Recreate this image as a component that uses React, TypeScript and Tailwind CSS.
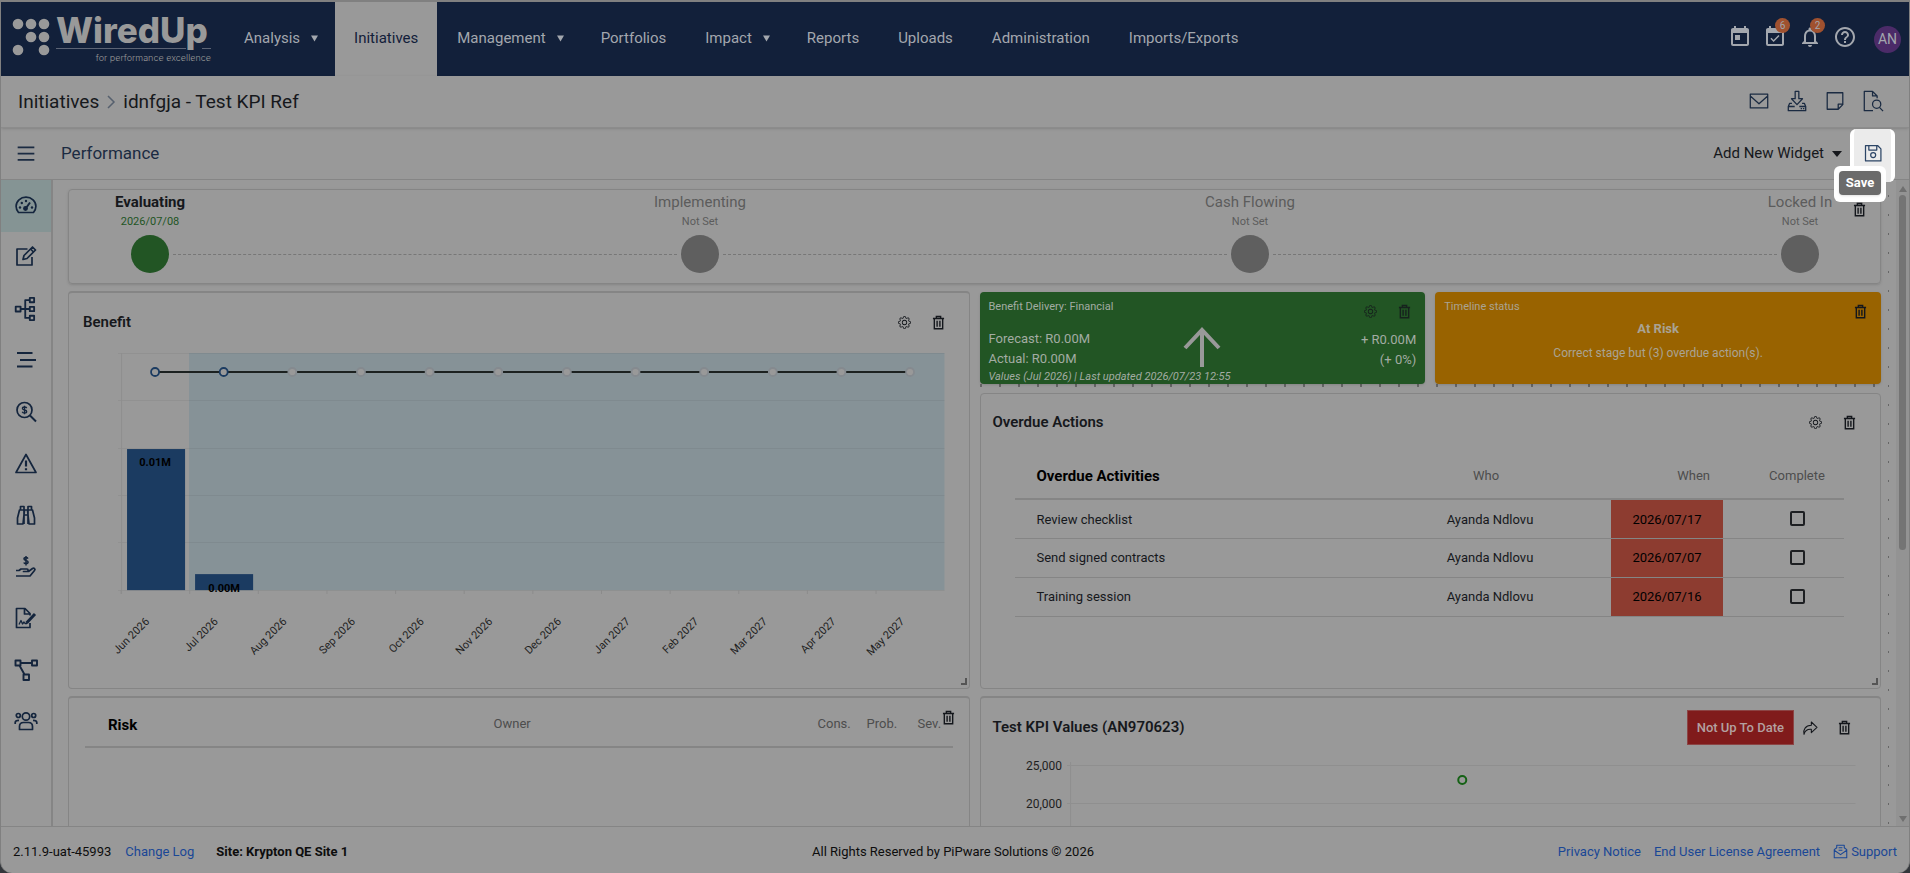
import React from 'react';
import { BsGear } from 'react-icons/bs';
import { MdEventAvailable, MdHelpOutline, MdNotificationsNone, MdToday } from 'react-icons/md';

interface IconProps {
  className?: string;
  children?: React.ReactNode;
}

const Icon: React.FC<IconProps> = ({ className = 'w-6 h-6', children }) => (
  <svg
    viewBox="0 0 24 24"
    className={className}
    fill="none"
    stroke="currentColor"
    strokeWidth="1.7"
    strokeLinejoin="round"
    aria-hidden="true"
  >
    {children}
  </svg>
);

const GaugeIcon = () => (
  <Icon>
    <path d="M4.5 18.5h15c1.500-1.700 2.400-4 2.400-6.200a9.900 9.100 0 0 0-19.800 0c0 2.200.9 4.500 2.400 6.200z" />
    <path d="M11 15.500l5-7" strokeWidth="2" />
    <circle cx="11.500" cy="14.500" r="1.600" fill="currentColor" />
    <g fill="currentColor" stroke="none">
      <circle cx="6" cy="13.500" r="1.200" />
      <circle cx="7.800" cy="9" r="1.200" />
      <circle cx="12" cy="7" r="1.200" />
      <circle cx="18" cy="13.500" r="1.200" />
    </g>
  </Icon>
);

const EditIcon = () => (
  <Icon>
    <path d="M13.500 4H3v16h15v-8" />
    <path d="M9 14.500l1-4 8.500-8.500 3 3L13 13.500z" />
    <path d="M16.500 4l3 3" />
  </Icon>
);

const HierarchyIcon = () => (
  <Icon className="w-[26px] h-[26px]">
    <path d="M2.500 9.800h4.500v4.500H2.500zM15.500 1.800h4v4h-4zM15.500 10h4v4h-4zM15.500 18.200h4v4h-4zM7 12h8.500M15.500 3.800h-4.200v16.400h4.200" />
  </Icon>
);

const BarsIcon = () => (
  <Icon>
    <path d="M3 5h15.500M6 12h16M3 18.500h15.500" strokeWidth="2.200" />
  </Icon>
);

const SearchDollarIcon = () => (
  <Icon>
    <circle cx="10.500" cy="10" r="7.500" />
    <path d="M16 15.500l6 6" strokeWidth="2" />
    <path d="M12.700 8.100c-.4-.8-1.200-1.100-2.200-1.100-1.300 0-2.100.6-2.100 1.500 0 2 4.300 1 4.300 3 0 1-.9 1.600-2.200 1.600-1.200 0-2-.5-2.300-1.300M10.500 5.700v8.600" strokeWidth="1.300" />
  </Icon>
);

const WarningIcon = () => (
  <Icon>
    <path d="M12 2.500L22 20.500H2z" />
    <path d="M12 8.500v6M12 16.300v2" strokeWidth="2.200" />
  </Icon>
);

const BinocularsIcon = () => (
  <Icon>
    <path d="M7 7H5.500L3.500 15v6H9l1.500-14M17 7h1.500l2 8v6H15L13.500 7M6.500 3.500H10V7H6.500zM14 3.500h3.500V7H14zM10 7h4M10.500 12h3M10 7v14M14 7v14" />
  </Icon>
);

const HandDollarIcon = () => (
  <Icon>
    <path d="M2 15.500h3l2-1.500h6c1.500 0 1.500 2.500 0 2.500H9.500h5l4-3c1.500-1 3.300.5 2 2l-4.500 5.500H2" />
    <path d="M14 3.600c-.4-.7-1.100-1-2-1-1.200 0-2 .6-2 1.500 0 2 4.100 1 4.100 3 0 1-.9 1.600-2.100 1.600-1.100 0-1.900-.5-2.200-1.300M12 1v9.500" strokeWidth="1.500" />
  </Icon>
);

const SignatureIcon = () => (
  <Icon>
    <path d="M16 17v4.500H2.500v-19H11l5 5v2M10.500 2.500V8H16" />
    <path d="M12.500 17l8.500-9" strokeWidth="3" />
    <path d="M5 18.500l2-4 1.500 3.500 1.500-2 1 1.500h2" strokeWidth="1.300" />
  </Icon>
);

const NetworkIcon = () => (
  <Icon>
    <path d="M1.500 2.500h5v5h-5zM18 2.500h5v5h-5zM9.500 16.500h5.500v5.500H9.500zM6.500 5H18M5.500 7.500l5 9" strokeWidth="1.900" />
  </Icon>
);

const TeamIcon = () => (
  <Icon>
    <circle cx="12" cy="7.500" r="3.700" />
    <circle cx="4.300" cy="6.500" r="2" />
    <circle cx="19.700" cy="6.500" r="2" />
    <path d="M5.500 20.500v-3c0-2.500 1.500-4 4-4h5c2.500 0 4 1.500 4 4v3zM1.200 15v-1.500c0-1.500 1-2.200 3.800-2.200M22.800 15v-1.500c0-1.500-1-2.200-3.800-2.200" />
  </Icon>
);

const TrashIcon = () => (
  <svg viewBox="0 0 14 16" className="w-[13px] h-[15px]" fill="none" stroke="currentColor" strokeWidth="1.500" aria-hidden="true">
    <path d="M1 3.700h12M4.700 3.500V1.500h4.600v2M2.500 3.700v11h9v-11M5.500 6v6.500M8.500 6v6.500" />
  </svg>
);

const Caret = () => (
  <svg viewBox="0 0 8 8" className="w-[7px] h-2" fill="currentColor" aria-hidden="true">
    <path d="M0 1h8L4 8z" />
  </svg>
);

const DeleteButton = () => (
  <button type="button" aria-label="Delete widget" className="flex w-4 justify-center text-[#14171c]">
    <TrashIcon />
  </button>
);

const SettingsButton = () => (
  <button type="button" aria-label="Widget settings" className="flex w-4 justify-center text-[#14171c]">
    <BsGear size={13} />
  </button>
);

const Logo = () => (
  <svg viewBox="0 0 204 50" className="w-[204px] h-[50px] shrink-0 overflow-visible" role="img" aria-label="WiredUp for performance excellence" fill="#999999">
    {[[7, 10], [20, 10], [33, 10], [20, 23], [33, 23], [7, 36], [33, 36]].map(([cx, cy]) => (
      <circle key={`${cx}-${cy}`} cx={cx} cy={cy} r="5.300" />
    ))}
    <text x="45" y="29" fontFamily="Inter, sans-serif" fontSize="35" fontWeight="800">WiredUp</text>
    <path d="M45 34.500h130M191 34.500h9" stroke="#5c6475" />
    <text x="200" y="47" textAnchor="end" fontFamily="Inter, sans-serif" fontSize="9" fontWeight="300">for performance excellence</text>
  </svg>
);

const navItems = [
  { label: 'Analysis', menu: true },
  { label: 'Initiatives', active: true },
  { label: 'Management', menu: true },
  { label: 'Portfolios' },
  { label: 'Impact', menu: true },
  { label: 'Reports' },
  { label: 'Uploads' },
  { label: 'Administration' },
  { label: 'Imports/Exports' },
];

const sideItems = [
  { label: 'Performance', icon: <GaugeIcon /> },
  { label: 'Edit', icon: <EditIcon /> },
  { label: 'Structure', icon: <HierarchyIcon /> },
  { label: 'Schedule', icon: <BarsIcon /> },
  { label: 'Benefits', icon: <SearchDollarIcon /> },
  { label: 'Risks', icon: <WarningIcon /> },
  { label: 'Insights', icon: <BinocularsIcon /> },
  { label: 'Costs', icon: <HandDollarIcon /> },
  { label: 'Sign off', icon: <SignatureIcon /> },
  { label: 'Workflow', icon: <NetworkIcon /> },
  { label: 'Team', icon: <TeamIcon /> },
];

const stages = [
  { name: 'Evaluating', date: '2026/07/08', done: true },
  { name: 'Implementing', date: 'Not Set', done: false },
  { name: 'Cash Flowing', date: 'Not Set', done: false },
  { name: 'Locked In', date: 'Not Set', done: false },
];

const activities = [
  { name: 'Review checklist', who: 'Ayanda Ndlovu', when: '2026/07/17' },
  { name: 'Send signed contracts', who: 'Ayanda Ndlovu', when: '2026/07/07' },
  { name: 'Training session', who: 'Ayanda Ndlovu', when: '2026/07/16' },
];

const months = [
  'Jun 2026', 'Jul 2026', 'Aug 2026', 'Sep 2026', 'Oct 2026', 'Nov 2026',
  'Dec 2026', 'Jan 2027', 'Feb 2027', 'Mar 2027', 'Apr 2027', 'May 2027',
];

const navItemClass = (item: { menu?: boolean; active?: boolean }) => {
  if (item.active) return '-mb-0.5 flex items-center bg-[#999999] px-[19px] pb-0.5 text-[#12203a]';
  if (item.menu) return 'flex items-center gap-[11px] pl-5 pr-[17px]';
  return 'flex items-center pl-5 pr-[19px]';
};

const Badge: React.FC<{ count: number }> = ({ count }) => (
  <span className="absolute -top-[7px] -right-[3px] flex h-[15px] w-[15px] items-center justify-center rounded-full bg-[#a0512f] text-[10px]">
    {count}
  </span>
);

const TopBar = () => (
  <header className="flex h-[74px] shrink-0 bg-[#12203a] text-[#a3a7ae]">
    <div className="pl-[10px] pt-3 w-[223px] shrink-0">
      <Logo />
    </div>
    <nav className="flex pb-0.5 text-[15px]">
      {navItems.map((item) => (
        <a key={item.label} href="#" className={navItemClass(item)}>
          {item.label}
          {item.menu && <Caret />}
        </a>
      ))}
    </nav>
    <div className="ml-auto mb-1 flex items-center gap-[11px] pr-2">
      <button type="button" aria-label="Calendar"><MdToday size={24} /></button>
      <button type="button" aria-label="Tasks" className="relative">
        <MdEventAvailable size={24} />
        <Badge count={6} />
      </button>
      <button type="button" aria-label="Notifications" className="relative">
        <MdNotificationsNone size={24} />
        <Badge count={2} />
      </button>
      <button type="button" aria-label="Help"><MdHelpOutline size={24} /></button>
      <button type="button" className="mt-1 ml-1.5 flex h-[27px] w-[27px] items-center justify-center rounded-full bg-[#4b2b68] text-sm">
        AN
      </button>
    </div>
  </header>
);

const Breadcrumb = () => (
  <div className="relative z-10 flex h-[52px] shrink-0 items-center border-b border-[#8c8c8c] pl-[17px] pr-[25px] pt-px text-[19px] text-[#16181c] shadow-sm">
    <a href="#">Initiatives</a>
    <svg viewBox="0 0 10 14" className="mx-[7px] h-3.5 w-2.5" fill="none" stroke="#56606e" strokeWidth="1.500" aria-hidden="true">
      <path d="M2 1l6 6-6 6" />
    </svg>
    <h1>idnfgja - Test KPI Ref</h1>
    <div className="ml-auto flex gap-4 pb-0.5 text-[#1b2b42]">
      <button type="button" aria-label="Email">
        <Icon className="h-[22px] w-[22px]">
          <path d="M2.500 4.500h19v15h-19zM2.500 6.500L12 15l9.500-8.500" strokeWidth="1.400" />
        </Icon>
      </button>
      <button type="button" aria-label="Download">
        <Icon className="h-[22px] w-[22px]">
          <path d="M10 1.500h4v8h4L12 16 6 9.500h4zM6.500 14.500H4L2.500 18v4.500h19V18L20 14.500h-2.500M2.500 18h7M14.500 18h7" strokeWidth="1.400" />
          <path d="M16 20.300h1.500M18.500 20.300H20" strokeWidth="1.400" />
        </Icon>
      </button>
      <button type="button" aria-label="Notes">
        <Icon className="h-[22px] w-[22px]">
          <path d="M3.500 3h17v13l-5 5h-12zM20.500 15.500h-5V21" strokeWidth="1.400" />
        </Icon>
      </button>
      <button type="button" aria-label="Preview document">
        <Icon className="h-[22px] w-[22px]">
          <path d="M12 22.500H2.500v-21h9l5 5V9M11.500 1.500v5h5M19 19l4 4" strokeWidth="1.400" />
          <circle cx="16" cy="15.500" r="4.500" strokeWidth="1.400" />
        </Icon>
      </button>
    </div>
  </div>
);

const Toolbar = () => (
  <div className="flex h-[52px] shrink-0 items-center border-b border-[#858585] text-[#1b2b42]">
    <button type="button" aria-label="Toggle menu" className="flex w-[50px] justify-center">
      <Icon className="h-5 w-5">
        <path d="M2 4h20M2 11.500h20M2 19h20" strokeWidth="2.200" />
      </Icon>
    </button>
    <h2 className="pl-[10px] text-[17px]">Performance</h2>
    <button type="button" className="ml-auto flex items-center gap-2 text-[15px] text-[#16181c]">
      Add New Widget
      <svg viewBox="0 0 10 6" className="h-1.5 w-2.5" fill="currentColor" aria-hidden="true">
        <path d="M0 0h10L5 6z" />
      </svg>
    </button>
    {/* spotlight round the save action and its tooltip */}
    <div className="relative z-20 ml-2 mr-[14px] w-[45px] self-stretch">
      <button type="button" aria-label="Save" aria-describedby="save-tip" className="absolute inset-x-0 top-px flex h-[53px] items-center justify-center rounded-md border-x-4 border-white bg-[#ebebeb] pb-1.5 text-[#2c4566]">
        <Icon className="h-5 w-5">
          <path d="M3 3h14.500L21.500 7v14.500H3zM7 3v5.500h9.500V3" strokeWidth="1.500" />
          <circle cx="12.200" cy="14.500" r="3" strokeWidth="1.500" />
        </Icon>
      </button>
      <div className="absolute -left-4 top-[38px] h-9 w-[52px] rounded-md bg-white p-[5px]">
        <div id="save-tip" role="tooltip" className="flex h-6 items-center justify-center rounded-sm bg-[#6b6b6b] text-[13px] font-bold text-white shadow">
          Save
        </div>
      </div>
    </div>
  </div>
);

const SideBar = () => (
  <nav className="w-[52px] shrink-0 border-r-2 border-[#858585] text-[#14253d]">
    <ul className="flex h-[567px] flex-col">
      {sideItems.map((item, i) => (
        <li key={item.label} className={i === 0 ? 'flex flex-1 bg-[#859494]' : 'flex flex-1'}>
          <a href="#" aria-label={item.label} className="flex flex-1 items-center justify-center">
            {item.icon}
          </a>
        </li>
      ))}
    </ul>
  </nav>
);

const StageCard = () => (
  <section className="relative h-[95px] rounded border border-[#858585] shadow-sm">
    <div className="flex justify-between pl-4 pr-[15px]">
      {stages.map((stage) => (
        <div key={stage.name} className="w-[130px] text-center text-[#5c5c5c]">
          <h3 className={stage.done ? 'text-[15px] leading-6 font-bold text-[#16181c]' : 'text-[15px] leading-6'}>{stage.name}</h3>
          <p className={stage.done ? 'text-[11px] leading-4 text-[#225524]' : 'text-[11px] leading-4'}>{stage.date}</p>
        </div>
      ))}
    </div>
    <div className="flex items-center gap-1 pl-[62px] pr-[61px] pt-[5px]">
      {stages.map((stage, i) => (
        <React.Fragment key={stage.name}>
          {i > 0 && <div className="flex-1 border-t border-dashed border-[#777777]" />}
          <div className={stage.done ? 'h-[38px] w-[38px] rounded-full bg-[#225524]' : 'h-[38px] w-[38px] rounded-full bg-[#5f5f5f]'} />
        </React.Fragment>
      ))}
    </div>
    <div className="absolute right-[13px] top-3">
      <DeleteButton />
    </div>
  </section>
);

const ResizeHandle = () => (
  <div className="absolute bottom-[3px] right-0.5 h-[7px] w-1.5 border-b-2 border-r-2 border-[#555555]" />
);

const BenefitChart = () => {
  const step = 68.6;
  const left = 52;
  const gridRows = [2, 49, 97, 144, 191, 239];
  return (
    <svg viewBox="0 0 899 336" className="block w-full" fontFamily="Roboto, sans-serif" role="img" aria-label="Benefit per month">
      <rect x="120" y="2" width="755" height="237" fill="#869297" />
      {gridRows.map((y) => (
        <path key={y} d={`M49 ${y}.500H875`} stroke="#000000" strokeOpacity="0.050" />
      ))}
      <path d="M52.500 2v241" stroke="#8f8f8f" />
      {months.map((month, i) => (
        <path key={month} d={`M${left + i * step} 239v4`} stroke="#8c8c8c" />
      ))}
      <rect x="58" y="98" width="58" height="141" fill="#1b3b61" />
      <rect x="126" y="223" width="58" height="16" fill="#1b3b61" />
      <path d={`M86 21H${86 + 11 * step}`} stroke="#1c2120" strokeWidth="2" />
      {months.map((month, i) => (
        <circle
          key={month}
          cx={86 + i * step}
          cy="21"
          r="4"
          fill="#999999"
          stroke={i < 2 ? '#1b3b61' : '#858a8f'}
          strokeWidth="1.800"
        />
      ))}
      <g fontSize="11" fontWeight="700" textAnchor="middle" fill="#000000">
        <text x="86" y="115">0.01M</text>
        <text x="155" y="241">0.00M</text>
      </g>
      <g fontSize="11" textAnchor="end" fill="#1f1f1f">
        {months.map((month, i) => (
          <text key={month} transform={`translate(${81 + i * step} 271) rotate(-45)`}>{month}</text>
        ))}
      </g>
    </svg>
  );
};

const BenefitCard = () => (
  <section className="relative h-[398px] overflow-hidden rounded border border-t-2 border-[#858585]">
    <header className="flex h-[58px] items-center gap-[18px] pl-[14px] pr-[22px]">
      <h3 className="mr-auto text-[15px] font-semibold text-[#16181c]">Benefit</h3>
      <SettingsButton />
      <DeleteButton />
    </header>
    <BenefitChart />
    <ResizeHandle />
  </section>
);

const RiskCard = () => (
  <section className="relative h-[240px] rounded border border-t-2 border-[#858585] px-4">
    <table className="w-full text-[13px]">
      <thead>
        <tr className="h-[49px] border-b-2 border-[#858585] text-left text-[#4d4d4d]">
          <th className="pl-[23px] pt-1.5 text-[15px] font-bold text-black">Risk</th>
          <th className="w-[324px] pt-1 font-normal">Owner</th>
          <th className="w-[49px] pt-1 font-normal">Cons.</th>
          <th className="w-[51px] pt-1 font-normal">Prob.</th>
          <th className="w-[35px] pt-1 font-normal">Sev.</th>
        </tr>
      </thead>
    </table>
    <div className="absolute right-3 top-3">
      <DeleteButton />
    </div>
  </section>
);

const FinancialCard = () => (
  <section className="relative flex flex-1 flex-col rounded bg-[#225524] px-[9px] pt-[7px] text-[13px] text-[#a3aca3] shadow-sm">
    <h3 className="text-[11px] leading-4">Benefit Delivery: Financial</h3>
    <div className="flex flex-1 justify-between pt-[14px]">
      <div className="leading-5">
        <p>Forecast: R0.00M</p>
        <p>Actual: R0.00M</p>
      </div>
      <div className="pt-px text-right leading-5">
        <p>+ R0.00M</p>
        <p>(+ 0%)</p>
      </div>
    </div>
    <p className="text-[11px] leading-[14px] italic">Values (Jul 2026) | Last updated 2026/07/23 12:55</p>
    <svg viewBox="0 0 38 40" className="absolute left-1/2 top-[35px] h-10 w-[38px] -translate-x-1/2" fill="none" stroke="#999999" strokeWidth="4" aria-hidden="true">
      <path d="M19 40V4M2 21L19 3l17 18" />
    </svg>
    <div className="absolute right-[13px] top-3 flex items-center gap-[18px] opacity-80">
      <SettingsButton />
      <DeleteButton />
    </div>
  </section>
);

const TimelineCard = () => (
  <section className="relative flex-1 rounded bg-[#996300] px-[9px] pt-[7px] text-[#aaa394] shadow-sm">
    <h3 className="text-[11px] leading-4">Timeline status</h3>
    <p className="pt-1 text-center text-[13px] leading-5 font-bold">At Risk</p>
    <p className="pt-1 text-center text-xs leading-5">Correct stage but (3) overdue action(s).</p>
    <div className="absolute right-[13px] top-3">
      <DeleteButton />
    </div>
  </section>
);

const OverdueCard = () => (
  <section className="relative h-[296px] rounded border border-[#858585]">
    <header className="flex h-[57px] items-center gap-[18px] pl-[12px] pr-[23px]">
      <h3 className="mr-auto text-[15px] font-semibold text-[#16181c]">Overdue Actions</h3>
      <SettingsButton />
      <DeleteButton />
    </header>
    <div className="pl-[34px] pr-9">
      <table className="w-full text-[13px] text-[#16181c]">
        <thead>
          <tr className="h-[48px] border-b-2 border-[#858585] text-[#4d4d4d]">
            <th className="pl-[22px] pt-1 text-left text-[15px] font-bold text-black">Overdue Activities</th>
            <th className="w-[242px] pt-0.5 pr-2 font-normal">Who</th>
            <th className="w-[112px] pt-0.5 pr-[13px] text-right font-normal">When</th>
            <th className="w-[121px] pt-0.5 pl-[27px] font-normal">Complete</th>
          </tr>
        </thead>
        <tbody>
          {activities.map((activity) => (
            <tr key={activity.name} className="h-[39px] border-b border-[#858585]">
              <td className="pt-px pl-[22px]">{activity.name}</td>
              <td className="pt-px text-center">{activity.who}</td>
              <td className="bg-[#8d3c30] pt-px text-center text-black">{activity.when}</td>
              <td className="pl-[27px] text-center">
                <input
                  type="checkbox"
                  aria-label={`Complete ${activity.name}`}
                  className="block mx-auto h-[15px] w-[15px] appearance-none rounded-xs border-2 border-[#1d1f22]"
                />
              </td>
            </tr>
          ))}
        </tbody>
      </table>
    </div>
    <ResizeHandle />
  </section>
);

const KpiCard = () => (
  <section className="h-[240px] rounded border border-t-2 border-[#858585]">
    <header className="flex h-[59px] items-center pl-[12px] pr-[28px]">
      <h3 className="mr-auto text-[15px] font-semibold text-[#16181c]">Test KPI Values (AN970623)</h3>
      <button type="button" className="h-[35px] border border-[#8c4444] bg-[#801b1b] px-[9px] text-[13px] font-medium text-[#b3a0a0]">
        Not Up To Date
      </button>
      <button type="button" aria-label="Share" className="ml-2 mr-[18px] text-[#14171c]">
        <Icon className="h-4 w-4">
          <path d="M14 3l8.500 8-8.500 8v-5C8 13.500 4.500 16 3 21.500 1.500 14 5 8.500 14 8z" strokeWidth="1.600" />
        </Icon>
      </button>
      <DeleteButton />
    </header>
    <svg viewBox="0 0 899 180" className="block w-full" fontFamily="Roboto, sans-serif" role="img" aria-label="Test KPI values">
      <path d="M86 8.500H874M86 46.500H874M86 84.500H874M89.500 5v175" stroke="#8f8f8f" />
      <g fontSize="12" textAnchor="end" fill="#1f1f1f">
        <text x="81" y="13">25,000</text>
        <text x="81" y="51">20,000</text>
      </g>
      <circle cx="481" cy="23" r="4" fill="none" stroke="#146114" strokeWidth="2" />
    </svg>
  </section>
);

const ScrollBar = () => (
  <div className="flex w-[13px] shrink-0 flex-col items-center bg-[#939393] py-1 text-[#6f6f6f]">
    <svg viewBox="0 0 8 6" className="mt-0.5 h-1.5 w-2" fill="currentColor" aria-hidden="true"><path d="M0 6h8L4 0z" /></svg>
    <div className="mt-[3px] h-[355px] w-[7px] rounded-full bg-[#747474]" />
    <svg viewBox="0 0 8 6" className="mt-auto h-1.5 w-2" fill="currentColor" aria-hidden="true"><path d="M0 0h8L4 6z" /></svg>
  </div>
);

const Footer = () => (
  <footer className="grid h-[47px] shrink-0 grid-cols-3 items-center border-t border-[#858585] px-[12px] pt-[3px] text-[13px] text-[#0d0d0d]">
    <div className="flex">
      <span>2.11.9-uat-45993</span>
      <a href="#" className="ml-[14px] text-[#1a4796]">Change Log</a>
      <strong className="ml-[22px]">Site: Krypton QE Site 1</strong>
    </div>
    <p className="pr-1 text-center">All Rights Reserved by PiPware Solutions © 2026</p>
    <div className="flex justify-end gap-[13px] text-[#1a4796]">
      <a href="#">Privacy Notice</a>
      <a href="#">End User License Agreement</a>
      <a href="#" className="flex items-center gap-[3px]">
        <Icon className="h-[15px] w-[15px]">
          <path d="M2 9l4-3V2h12v4l4 3v13H2zM2 10l10 7 10-7M9 6h6M9 10h6" />
        </Icon>
        Support
      </a>
    </div>
  </footer>
);

const App: React.FC = () => (
  <div className="h-screen bg-[#33363b] font-[Roboto,sans-serif]">
    <div className="flex h-full flex-col overflow-hidden rounded-b-xl border-x border-t-2 border-[#808080] bg-[#999999] text-base">
      <TopBar />
      <Breadcrumb />
      <Toolbar />
      <div className="flex min-h-0 flex-1 overflow-hidden">
        <SideBar />
        <main className="ml-[15px] min-w-0 flex-1 pt-[9px]">
          <StageCard />
          <div className="grid grid-cols-2 gap-[10px] pt-[7px]">
            <div className="flex flex-col gap-[7px]">
              <BenefitCard />
              <RiskCard />
            </div>
            <div className="flex flex-col">
              <div className="flex h-[93px] gap-[10px] pt-px">
                <FinancialCard />
                <TimelineCard />
              </div>
              <div className="mb-1.5 h-[3px] bg-[repeating-linear-gradient(to_right,#666_0px_2px,transparent_2px_19px)]" />
              <OverdueCard />
              <div className="pt-[7px]">
                <KpiCard />
              </div>
            </div>
          </div>
        </main>
        {/* drag grid marks */}
        <div className="mx-[7px] mt-[15px] w-px shrink-0 bg-[repeating-linear-gradient(to_bottom,#666_0px_2px,transparent_2px_19px)]" />
        <ScrollBar />
      </div>
      <Footer />
    </div>
  </div>
);

export default App;
